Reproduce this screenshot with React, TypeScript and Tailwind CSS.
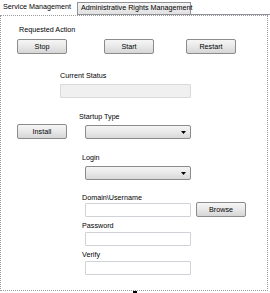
import React from "react";

const font = { fontFamily: '"Liberation Sans", Arial, sans-serif' };

const Button = ({ label, className = "" }: { label: string; className?: string }) => (
  <div
    className={`flex h-[15px] w-[50px] shrink-0 items-center justify-center rounded-[2px] border border-[#8a8a8a] bg-gradient-to-b from-[#f6f6f6] via-[#e8e8e8] to-[#d6d6d6] text-[7.2px] leading-[8px] text-black ${className}`}
  >
    {label}
  </div>
);

const Label = ({ text, className = "" }: { text: string; className?: string }) => (
  <div className={`h-[8px] whitespace-nowrap text-[7.2px] leading-[8px] text-black ${className}`}>{text}</div>
);

const Combo = ({ className = "" }: { className?: string }) => (
  <div
    className={`flex h-[14px] w-[106px] items-center justify-end rounded-[2px] border border-[#8a8a8a] bg-gradient-to-b from-[#f4f4f4] via-[#e9e9e9] to-[#d9d9d9] pr-[4px] ${className}`}
  >
    <svg width="5" height="3" viewBox="0 0 5 3">
      <polygon points="0,0 5,0 2.5,3" fill="#000" />
    </svg>
  </div>
);

const TextBox = ({ className = "" }: { className?: string }) => (
  <div className={`h-[14px] w-[106px] rounded-[1px] border border-[#cfd3d8] bg-white ${className}`} />
);

export default function App() {
  return (
    <div className="h-[293px] w-[270px] overflow-hidden bg-white opacity-[0.99]" style={font}>
      {/* tab strip */}
      <div className="flex h-[15px] items-end">
        <div className="h-[15px] w-[77px] whitespace-nowrap bg-white pl-[3px] pt-[3px] text-[7.2px] leading-[8px] text-black">
          Service Management
        </div>
        <div className="h-[13px] w-[114px] whitespace-nowrap border border-[#8f9196] bg-gradient-to-b from-[#f4f4f4] to-[#e2e2e2] pl-[3px] pt-[1px] text-[7.2px] leading-[8px] text-black">
          Administrative Rights Management
        </div>
        <div className="h-full flex-1 border-b border-[#8f9196]" />
      </div>

      {/* tab page */}
      <div className="h-[276px] w-[268px] border border-dotted border-[#9a9a9a]">
        <Label text="Requested Action" className="ml-[18px] mt-[10px]" />
        <div className="mt-[5px] flex">
          <Button label="Stop" className="ml-[16px]" />
          <Button label="Start" className="ml-[37px]" />
          <Button label="Restart" className="ml-[32px]" />
        </div>

        <Label text="Current Status" className="ml-[59px] mt-[18px]" />
        <div className="ml-[59px] mt-[4px] h-[14px] w-[131px] rounded-[1px] border border-[#d9d9d9] bg-[#f0f0f0]" />

        <div className="mt-[15px] flex">
          <Button label="Install" className="ml-[16px] mt-[11px]" />
          <div className="ml-[12px] flex flex-col">
            <Label text="Startup Type" />
            <Combo className="ml-[6px] mt-[4px]" />

            <Label text="Login" className="ml-[3px] mt-[15px]" />
            <Combo className="ml-[6px] mt-[4px]" />

            <Label text="Domain\Username" className="ml-[3px] mt-[14px]" />
            <div className="flex items-start">
              <TextBox className="ml-[6px] mt-[1px]" />
              <Button label="Browse" className="ml-[5px]" />
            </div>

            <Label text="Password" className="ml-[3px] mt-[5px]" />
            <TextBox className="ml-[6px] mt-[2px]" />

            <Label text="Verify" className="ml-[3px] mt-[5px]" />
            <TextBox className="ml-[6px] mt-[2px]" />
          </div>
        </div>
      </div>
      <div className="ml-[133px] h-[2px] w-[4px] bg-black" />
    </div>
  );
}
